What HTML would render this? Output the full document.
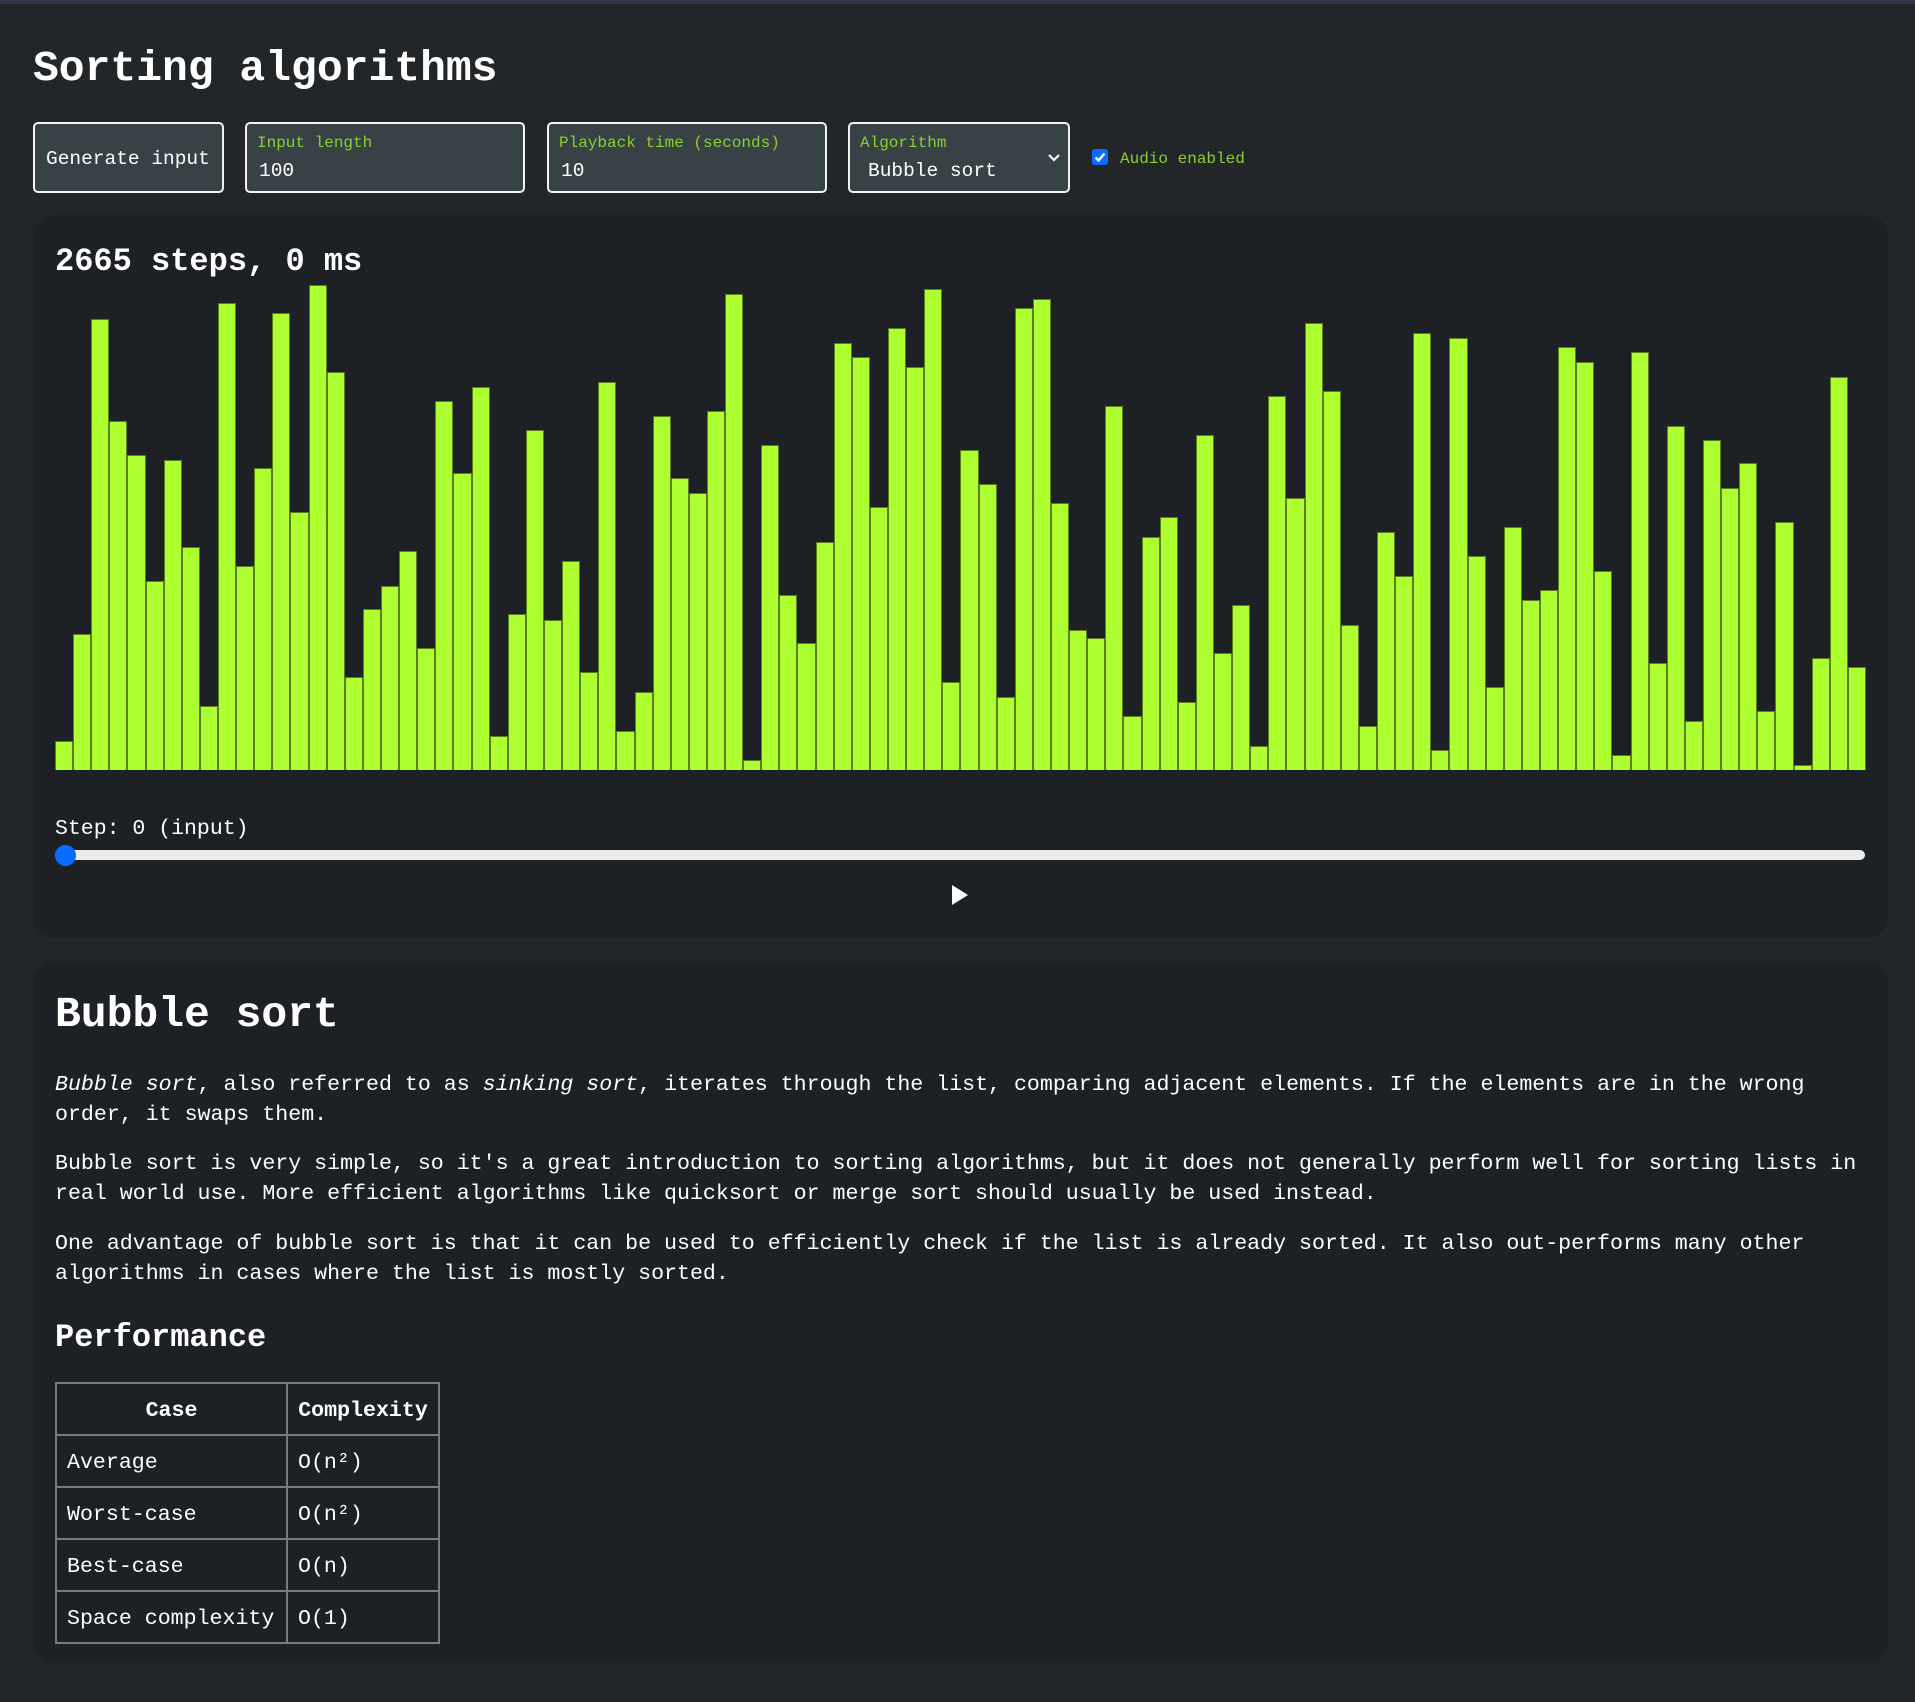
<!DOCTYPE html>
<html><head><meta charset="utf-8"><style>
*{box-sizing:border-box;margin:0;padding:0}
html,body{width:1915px;height:1702px;overflow:hidden}
body{background:#222629;font-family:"Liberation Mono",monospace;color:#fff;position:relative}
.topbar{position:absolute;left:0;top:0;width:1915px;height:4px;background:#32344a}
.abs{position:absolute;white-space:pre}
h1{position:absolute;left:33px;top:41px;font-size:43px;font-weight:bold;line-height:56px}
.box{position:absolute;top:122px;height:71px;background:#374146;border:2px solid #f2f2f2;border-radius:5px}
.lab{position:absolute;left:10px;top:9px;font-size:16px;color:#8fce2c;line-height:20px;white-space:pre}
.val{position:absolute;left:12px;top:35px;font-size:19.5px;line-height:24px;white-space:pre}
.card{position:absolute;left:33px;width:1855px;background:#1d2024;border-radius:22px}
.chart{position:absolute;left:55px;top:280px;width:1811px;height:490px;display:flex;align-items:flex-end}
.chart div{flex:1;background:#adff2f;border:1px solid #5c7d1c;border-bottom:none}
p{position:absolute;left:55px;font-size:21.6px;line-height:29.5px;white-space:pre}
table{position:absolute;left:55px;top:1382px;border-collapse:collapse;font-size:21.6px}
td,th{border:2px solid #7a7a7a;height:52px;padding:3px 10px 0;text-align:left;white-space:pre}
th{text-align:center}
</style></head><body>
<div class="topbar"></div>
<h1>Sorting algorithms</h1>
<div class="box" style="left:33px;width:191px"><div class="val" style="left:11px;top:23px">Generate input</div></div>
<div class="box" style="left:245px;width:280px"><div class="lab">Input length</div><div class="val">100</div></div>
<div class="box" style="left:547px;width:280px"><div class="lab">Playback time (seconds)</div><div class="val">10</div></div>
<div class="box" style="left:848px;width:222px"><div class="lab">Algorithm</div><div class="val" style="left:18px">Bubble sort</div>
<svg style="position:absolute;left:197px;top:29px" width="14" height="10" viewBox="0 0 14 10"><path d="M2 2 L7 7 L12 2" fill="none" stroke="#fff" stroke-width="2.2"/></svg></div>
<div style="position:absolute;left:1092px;top:149px;width:16px;height:16px;background:#0a6cff;border-radius:3px"><svg width="16" height="16" viewBox="0 0 16 16"><path d="M3.5 8.5 L6.5 11.5 L12.5 4.5" fill="none" stroke="#fff" stroke-width="2.4"/></svg></div>
<div class="abs" style="left:1120px;top:148px;font-size:16px;line-height:22px;color:#8fce2c">Audio enabled</div>

<div class="card" style="top:215px;height:723px"></div>
<div class="abs" style="left:55px;top:242px;font-size:32px;font-weight:bold;line-height:40px">2665 steps, 0 ms</div>
<div class="chart">
<div style="height:29px"></div><div style="height:136px"></div><div style="height:451px"></div><div style="height:349px"></div><div style="height:315px"></div><div style="height:189px"></div><div style="height:310px"></div><div style="height:223px"></div><div style="height:64px"></div><div style="height:467px"></div>
<div style="height:204px"></div><div style="height:302px"></div><div style="height:457px"></div><div style="height:258px"></div><div style="height:485px"></div><div style="height:398px"></div><div style="height:93px"></div><div style="height:161px"></div><div style="height:184px"></div><div style="height:219px"></div>
<div style="height:122px"></div><div style="height:369px"></div><div style="height:297px"></div><div style="height:383px"></div><div style="height:34px"></div><div style="height:156px"></div><div style="height:340px"></div><div style="height:150px"></div><div style="height:209px"></div><div style="height:98px"></div>
<div style="height:388px"></div><div style="height:39px"></div><div style="height:78px"></div><div style="height:354px"></div><div style="height:292px"></div><div style="height:277px"></div><div style="height:359px"></div><div style="height:476px"></div><div style="height:10px"></div><div style="height:325px"></div>
<div style="height:175px"></div><div style="height:127px"></div><div style="height:228px"></div><div style="height:427px"></div><div style="height:413px"></div><div style="height:263px"></div><div style="height:442px"></div><div style="height:403px"></div><div style="height:481px"></div><div style="height:88px"></div>
<div style="height:320px"></div><div style="height:286px"></div><div style="height:73px"></div><div style="height:462px"></div><div style="height:471px"></div><div style="height:267px"></div><div style="height:140px"></div><div style="height:132px"></div><div style="height:364px"></div><div style="height:54px"></div>
<div style="height:233px"></div><div style="height:253px"></div><div style="height:68px"></div><div style="height:335px"></div><div style="height:117px"></div><div style="height:165px"></div><div style="height:24px"></div><div style="height:374px"></div><div style="height:272px"></div><div style="height:447px"></div>
<div style="height:379px"></div><div style="height:145px"></div><div style="height:44px"></div><div style="height:238px"></div><div style="height:194px"></div><div style="height:437px"></div><div style="height:20px"></div><div style="height:432px"></div><div style="height:214px"></div><div style="height:83px"></div>
<div style="height:243px"></div><div style="height:170px"></div><div style="height:180px"></div><div style="height:423px"></div><div style="height:408px"></div><div style="height:199px"></div><div style="height:15px"></div><div style="height:418px"></div><div style="height:107px"></div><div style="height:344px"></div>
<div style="height:49px"></div><div style="height:330px"></div><div style="height:282px"></div><div style="height:307px"></div><div style="height:59px"></div><div style="height:248px"></div><div style="height:5px"></div><div style="height:112px"></div><div style="height:393px"></div><div style="height:103px"></div>
</div>
<div class="abs" style="left:55px;top:815px;font-size:21.5px;line-height:28px">Step: 0 (input)</div>
<div style="position:absolute;left:55px;top:850px;width:1810px;height:10px;background:#ececec;border-radius:5px"></div>
<div style="position:absolute;left:55px;top:845px;width:21px;height:21px;background:#0a6cff;border-radius:50%"></div>
<svg style="position:absolute;left:951px;top:884px" width="18" height="22" viewBox="0 0 18 22"><path d="M1 1 L17 11 L1 21 Z" fill="#fff"/></svg>

<div class="card" style="top:961px;height:702px"></div>
<div class="abs" style="left:55px;top:987px;font-size:43px;font-weight:bold;line-height:56px">Bubble sort</div>
<p style="top:1071px"><i>Bubble sort</i>, also referred to as <i>sinking sort</i>, iterates through the list, comparing adjacent elements. If the elements are in the wrong
order, it swaps them.</p>
<p style="top:1150px">Bubble sort is very simple, so it's a great introduction to sorting algorithms, but it does not generally perform well for sorting lists in
real world use. More efficient algorithms like quicksort or merge sort should usually be used instead.</p>
<p style="top:1230px">One advantage of bubble sort is that it can be used to efficiently check if the list is already sorted. It also out-performs many other
algorithms in cases where the list is mostly sorted.</p>
<div class="abs" style="left:55px;top:1318px;font-size:32px;font-weight:bold;line-height:40px">Performance</div>
<table>
<tr><th style="width:231px">Case</th><th style="width:152px">Complexity</th></tr>
<tr><td>Average</td><td>O(n²)</td></tr>
<tr><td>Worst-case</td><td>O(n²)</td></tr>
<tr><td>Best-case</td><td>O(n)</td></tr>
<tr><td>Space complexity</td><td>O(1)</td></tr>
</table>
</body></html>
